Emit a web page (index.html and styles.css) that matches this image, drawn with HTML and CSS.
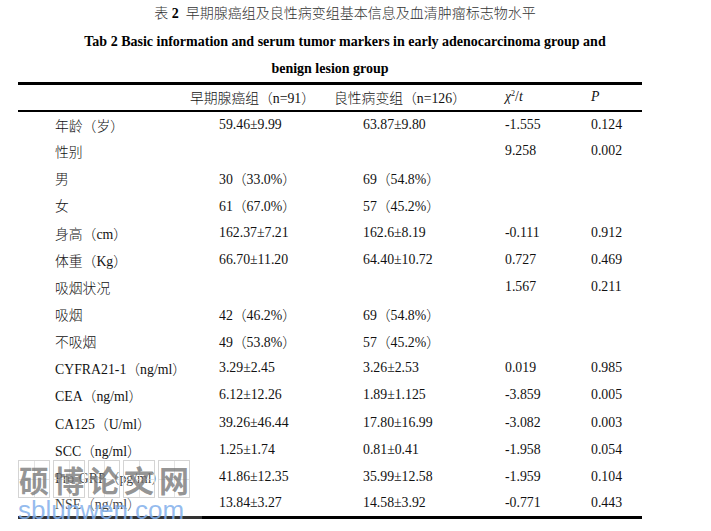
FILE: index.html
```html
<!DOCTYPE html>
<html lang="zh">
<head>
<meta charset="utf-8">
<link rel="stylesheet" href="styles.css">
</head>
<body>
<div class="page">
  <div class="caption">
    <div class="cap-line cap-cn shift">表 <b>2</b>&nbsp; 早期腺癌组及良性病变组基本信息及血清肿瘤标志物水平</div>
    <div class="cap-line cap-en shift">Tab 2 Basic information and serum tumor markers in early adenocarcinoma group and</div>
    <div class="cap-line cap-en last">benign lesion group</div>
  </div>
  <table class="data">
    <colgroup>
      <col class="c1"><col class="c2"><col class="c3"><col class="c4"><col class="c5">
    </colgroup>
    <thead>
      <tr>
        <th></th>
        <th>早期腺癌组（n=91）</th>
        <th>良性病变组（n=126）</th>
        <th><i>χ</i><sup>2</sup>/<i>t</i></th>
        <th><i>P</i></th>
      </tr>
    </thead>
    <tbody>
      <tr><td>年龄（岁）</td><td class="v">59.46±9.99</td><td class="v">63.87±9.80</td><td>-1.555</td><td>0.124</td></tr>
      <tr><td>性别</td><td class="v"></td><td class="v"></td><td>9.258</td><td>0.002</td></tr>
      <tr><td>男</td><td class="v">30（33.0%）</td><td class="v">69（54.8%）</td><td></td><td></td></tr>
      <tr><td>女</td><td class="v">61（67.0%）</td><td class="v">57（45.2%）</td><td></td><td></td></tr>
      <tr><td>身高（cm）</td><td class="v">162.37±7.21</td><td class="v">162.6±8.19</td><td>-0.111</td><td>0.912</td></tr>
      <tr><td>体重（Kg）</td><td class="v">66.70±11.20</td><td class="v">64.40±10.72</td><td>0.727</td><td>0.469</td></tr>
      <tr><td>吸烟状况</td><td class="v"></td><td class="v"></td><td>1.567</td><td>0.211</td></tr>
      <tr><td>吸烟</td><td class="v">42（46.2%）</td><td class="v">69（54.8%）</td><td></td><td></td></tr>
      <tr><td>不吸烟</td><td class="v">49（53.8%）</td><td class="v">57（45.2%）</td><td></td><td></td></tr>
      <tr><td>CYFRA21-1（ng/ml）</td><td class="v">3.29±2.45</td><td class="v">3.26±2.53</td><td>0.019</td><td>0.985</td></tr>
      <tr><td>CEA（ng/ml）</td><td class="v">6.12±12.26</td><td class="v">1.89±1.125</td><td>-3.859</td><td>0.005</td></tr>
      <tr><td>CA125（U/ml）</td><td class="v">39.26±46.44</td><td class="v">17.80±16.99</td><td>-3.082</td><td>0.003</td></tr>
      <tr><td>SCC（ng/ml）</td><td class="v">1.25±1.74</td><td class="v">0.81±0.41</td><td>-1.958</td><td>0.054</td></tr>
      <tr><td>Pro-GRP（pg/ml）</td><td class="v">41.86±12.35</td><td class="v">35.99±12.58</td><td>-1.959</td><td>0.104</td></tr>
      <tr><td>NSE（ng/ml）</td><td class="v">13.84±3.27</td><td class="v">14.58±3.92</td><td>-0.771</td><td>0.443</td></tr>
    </tbody>
  </table>

  <div class="watermark" aria-hidden="true">
    <div class="wm-boxes">
      <span class="wm-box">硕</span><span class="wm-box">博</span><span class="wm-box">论</span><span class="wm-box">文</span><span class="wm-box">网</span>
    </div>
    <div class="wm-url">sblunwen.com</div>
  </div>
</div>
</body>
</html>
```

FILE: styles.css
```css
* { box-sizing: border-box; }
html, body { margin: 0; padding: 0; background: #fff; }
body {
  font-family: "Liberation Serif", "Noto Sans CJK SC", serif;
  color: #000;
}
.page {
  position: relative;
  width: 711px;
  height: 531px;
  overflow: hidden;
  padding-left: 18px;
}
.caption {
  width: 624px;
}
.cap-line {
  text-align: center;
  font-size: 14px;
  white-space: nowrap;
}
.cap-cn {
  height: 28px;
  line-height: 28px;
  color: #333;
  font-weight: 300;
}
.cap-cn b { font-weight: bold; color: #000; }
.cap-en {
  height: 27.5px;
  line-height: 27.5px;
  font-weight: bold;
}
.cap-en.last { height: 26.5px; line-height: 26.5px; }
.shift { padding-left: 30px; }

.data {
  width: 624px;
  border-collapse: collapse;
  table-layout: fixed;
  font-size: 13.8px;
  font-weight: 300;
  color: #111;
  border-top: 3px solid #000;
  border-bottom: 3px solid #000;
}
.c1 { width: 172px; }
.c2 { width: 144px; }
.c3 { width: 171px; }
.c4 { width: 86px; }
.c5 { width: 51px; }
.data thead tr { height: 27px; }
.data th {
  font-weight: 300;
  text-align: left;
  padding: 0;
  white-space: nowrap;
  border-bottom: 2px solid #000;
}
.data th sup { font-size: 8px; vertical-align: 5px; line-height: 0; }
.data tbody tr { height: 27.15px; }
.data td {
  padding: 0;
  white-space: nowrap;
  vertical-align: middle;
}
.data td:first-child { padding-left: 37px; }
.data td.v { padding-left: 29px; }

.watermark {
  position: absolute;
  left: 18px;
  top: 460px;
  width: 184px;
  height: 64px;
  background: rgba(255,255,255,0.2);
}
.wm-boxes {
  display: flex;
  gap: 3px;
}
.wm-box {
  position: relative;
  width: 32px;
  height: 38px;
  border: 1px solid #d4d4d4;
  font-family: "Noto Sans CJK SC", sans-serif;
  font-weight: bold;
  font-size: 30px;
  line-height: 36px;
  text-align: center;
  color: rgba(120,120,120,0.8);
  background:
    linear-gradient(to right, transparent 15px, rgba(210,210,210,0.6) 15px, rgba(210,210,210,0.6) 16px, transparent 16px),
    linear-gradient(to bottom, transparent 18px, rgba(210,210,210,0.6) 18px, rgba(210,210,210,0.6) 19px, transparent 19px);
}
.wm-url {
  font-family: "Liberation Sans", Arial, sans-serif;
  font-size: 26px;
  line-height: 26px;
  color: rgba(130,175,235,0.85);
  margin-top: -1px;
}
```
